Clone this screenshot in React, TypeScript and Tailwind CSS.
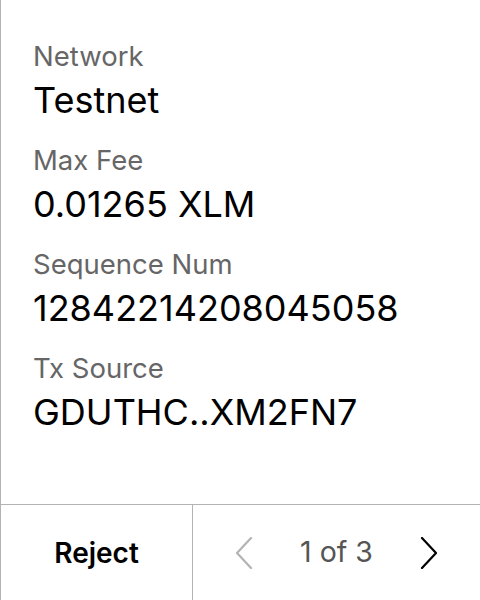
const rows = [
  { label: 'Network', value: 'Testnet' },
  { label: 'Max Fee', value: '0.01265 XLM' },
  { label: 'Sequence Num', value: '12842214208045058' },
  { label: 'Tx Source', value: 'GDUTHC..XM2FN7' },
];

function Chevron({ dir, className }: { dir: 'left' | 'right'; className: string }) {
  const points = dir === 'left' ? '16,1 2,16 16,31' : '2,1 16,16 2,31';
  return (
    <svg width="18" height="32" viewBox="0 0 18 32" className={className}>
      <polyline points={points} fill="none" stroke="currentColor" strokeWidth="2.2" strokeLinecap="round" strokeLinejoin="round" />
    </svg>
  );
}

export default function App() {
  return (
    <div
      className="w-[480px] h-[600px] bg-white border-l border-[#b3b3b3] flex flex-col"
      style={{ fontFamily: 'Inter, "Noto Sans", sans-serif' }}
    >
      <div className="flex-1 px-[32px] pt-[38px] flex flex-col gap-[16px]">
        {rows.map((row) => (
          <div key={row.label} className="flex flex-col">
            <span className="text-[27.5px] leading-[36px] text-[#666666]">{row.label}</span>
            <span className="text-[36px] leading-[52px] text-black">{row.value}</span>
          </div>
        ))}
      </div>

      {/* Footer actions */}
      <div className="h-[96px] border-t border-[#b3b3b3] flex">
        <button className="w-[192px] border-r border-[#b3b3b3] text-[28px] font-semibold text-black">
          Reject
        </button>
        <div className="flex-1 flex items-center justify-center gap-[47px]">
          <Chevron dir="left" className="text-[#b3b3b3]" />
          <span className="text-[28.5px] text-[#555555]">1 of 3</span>
          <Chevron dir="right" className="text-black" />
        </div>
      </div>
    </div>
  );
}
